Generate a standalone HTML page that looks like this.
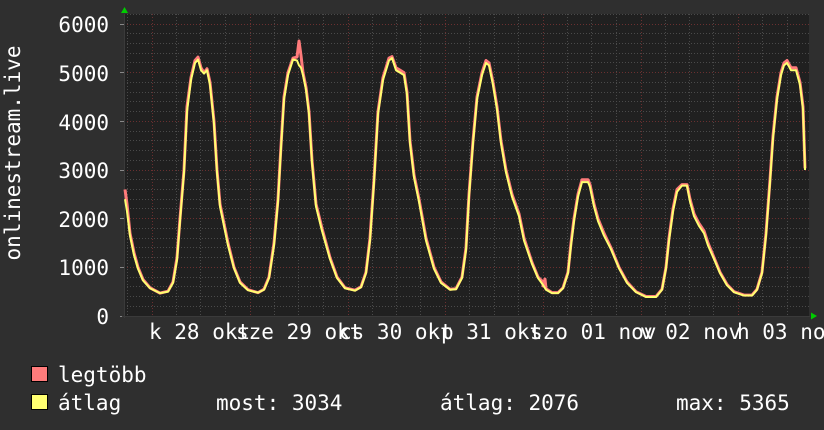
<!DOCTYPE html>
<html><head><meta charset="utf-8"><style>
html,body{margin:0;padding:0;background:#2f2f2f;}
body{width:824px;height:430px;overflow:hidden;position:relative;font-family:"DejaVu Sans Mono","Liberation Mono",monospace;color:#fff;}
svg{position:absolute;left:0;top:0;}
text{font-family:"DejaVu Sans Mono","Liberation Mono",monospace;font-size:21px;fill:#fff;}
</style></head><body>
<svg width="824" height="430" viewBox="0 0 824 430">
<rect x="0" y="0" width="824" height="430" fill="#2f2f2f"/>
<rect x="124" y="14" width="685" height="302" fill="#202020"/>
<!-- minor grid -->
<path fill="none" stroke="#4a4a4a" stroke-width="1" stroke-dasharray="1,2" d="
M124 306.5H809M124 296.5H809M124 286.5H809M124 277.5H809M124 257.5H809M124 247.5H809M124 238.5H809M124 228.5H809
M124 208.5H809M124 199.5H809M124 189.5H809M124 179.5H809M124 160.5H809M124 150.5H809M124 140.5H809M124 131.5H809
M124 111.5H809M124 101.5H809M124 92.5H809M124 82.5H809M124 62.5H809M124 53.5H809M124 43.5H809M124 33.5H809M124 14.5H809
M127.5 14V316M176.5 14V316M200.5 14V316M225.5 14V316M274.5 14V316M298.5 14V316M323.5 14V316M372.5 14V316M396.5 14V316M420.5 14V316
M469.5 14V316M494.5 14V316M518.5 14V316M567.5 14V316M591.5 14V316M616.5 14V316M665.5 14V316M689.5 14V316M713.5 14V316M762.5 14V316M787.5 14V316"/>
<!-- major grid -->
<path fill="none" stroke="#6a3030" stroke-width="1" stroke-dasharray="1,2" d="
M124 267.5H809M124 218.5H809M124 170.5H809M124 121.5H809M124 72.5H809M124 24.5H809
M152.5 14V316M250.5 14V316M348.5 14V316M445.5 14V316M543.5 14V316M641.5 14V316M738.5 14V316"/>
<!-- ticks -->
<path fill="none" stroke="#888" stroke-width="1" d="M120 316.5H124M120 267.5H124M120 218.5H124M120 170.5H124M120 121.5H124M120 72.5H124M120 24.5H124"/>
<line x1="124.5" y1="14" x2="124.5" y2="318" stroke="#3a3a3a"/>
<line x1="122" y1="316.5" x2="810" y2="316.5" stroke="#3a3a3a"/>
<g transform="translate(0,316) scale(1,-0.04867)">
<polyline vector-effect="non-scaling-stroke" fill="none" stroke="#ff7b7b" stroke-width="3" stroke-linejoin="round" points="
125,2600 127,2300 130,1700 134,1300 138,1000 143,750 150,580 160,470 168,510 173,700 177,1200 180,2000 184,3000 187,4300 191,4900 195,5250 198,5320 201,5100 204,5000 207,5080 210,4800 214,4000 217,3000 220,2300 223,2000 228,1500 234,1000 240,700 248,540 258,480 264,550 269,800 274,1500 278,2400 281,3500 284,4500 288,5000 293,5300 297,5320 299,5650 301,5350 303,5000 306,4700 309,4200 312,3200 316,2300 322,1800 330,1200 337,800 345,580 355,530 361,600 366,900 370,1600 374,2800 378,4200 383,4900 389,5300 392,5330 396,5100 400,5050 404,5000 407,4600 410,3600 414,2900 419,2400 426,1600 434,1000 441,700 450,550 456,560 462,800 466,1400 469,2500 473,3600 477,4500 482,5000 486,5250 489,5200 493,4800 497,4300 501,3600 506,3000 512,2500 519,2100 524,1600 532,1100 538,800 543,700 543,620 545,760 546,560 552,480 558,480 563,580 568,900 571,1500 574,2000 578,2500 582,2800 588,2800 590,2700 594,2300 598,2000 604,1700 611,1400 619,1000 627,700 636,500 646,400 656,400 662,550 666,1000 669,1600 673,2200 677,2600 682,2700 687,2700 690,2400 694,2100 699,1900 704,1750 708,1500 714,1200 720,900 727,650 734,500 744,430 752,430 757,550 762,900 766,1700 770,2800 773,3700 777,4500 781,5000 784,5200 787,5250 791,5100 796,5100 800,4800 803,4300 805,3034"/>
<polyline vector-effect="non-scaling-stroke" fill="none" stroke="#ffff70" stroke-width="2" stroke-linejoin="round" points="
125,2400 127,2150 130,1650 134,1250 138,970 143,730 150,570 160,470 168,500 173,680 177,1150 180,1950 184,2950 187,4200 191,4850 195,5200 198,5270 201,5050 204,4980 207,5050 210,4750 214,3950 217,2950 220,2250 223,1950 228,1450 234,980 240,680 248,530 258,480 264,540 269,780 274,1450 278,2350 281,3450 284,4450 288,4950 293,5270 297,5250 299,5150 301,5100 303,4950 306,4650 309,4150 312,3150 316,2250 322,1750 330,1170 337,780 345,570 355,520 361,590 366,880 370,1550 374,2750 378,4150 383,4850 389,5250 392,5300 396,5050 400,5000 404,4950 407,4550 410,3550 414,2850 419,2350 426,1550 434,970 441,680 450,540 456,550 462,780 466,1350 469,2450 473,3550 477,4450 482,4950 486,5200 489,5150 493,4750 497,4250 501,3550 506,2950 512,2450 519,2050 524,1550 532,1070 538,780 543,640 546,540 552,470 558,470 563,570 568,880 571,1450 574,1950 578,2450 582,2750 588,2750 590,2650 594,2250 598,1950 604,1650 611,1370 619,980 627,680 636,490 646,390 656,390 662,540 666,980 669,1550 673,2150 677,2550 682,2680 687,2680 690,2350 694,2050 699,1850 704,1700 708,1450 714,1170 720,880 727,630 734,490 744,420 752,420 757,540 762,880 766,1650 770,2750 773,3650 777,4450 781,4950 784,5150 787,5200 791,5050 796,5050 800,4750 803,4250 805,3034 805,3000"/>
</g>
<!-- arrows -->
<polygon points="121,13 124.5,7 128,13" fill="#00cc00"/>
<polygon points="811,312.5 817,316 811,319.5" fill="#00cc00"/>
<!-- y labels -->
<g text-anchor="end">
<text x="109" y="32">6000</text>
<text x="109" y="81">5000</text>
<text x="109" y="130">4000</text>
<text x="109" y="178">3000</text>
<text x="109" y="227">2000</text>
<text x="109" y="275">1000</text>
<text x="109" y="324">0</text>
</g>
<text transform="translate(20,153) rotate(-90)" text-anchor="middle">onlinestream.live</text>
<!-- x labels -->
<text x="149" y="339">k 28 okt</text>
<text x="236" y="339">sze 29 okt</text>
<text x="339" y="339">cs 30 okt</text>
<text x="441" y="339">p 31 okt</text>
<text x="530" y="339">szo 01 nov</text>
<text x="640" y="339">v 02 nov</text>
<text x="737" y="339">h 03 nov</text>
<!-- legend -->
<rect x="31.5" y="366.5" width="16" height="15" fill="#ff7b7b" stroke="#000"/>
<rect x="31.5" y="394.5" width="16" height="15" fill="#ffff70" stroke="#000"/>
<text x="58" y="382">legtöbb</text>
<text x="58" y="410">átlag</text>
<text x="216" y="410">most: 3034</text>
<text x="440" y="410">átlag: 2076</text>
<text x="676" y="410">max: 5365</text>
</svg>
</body></html>
